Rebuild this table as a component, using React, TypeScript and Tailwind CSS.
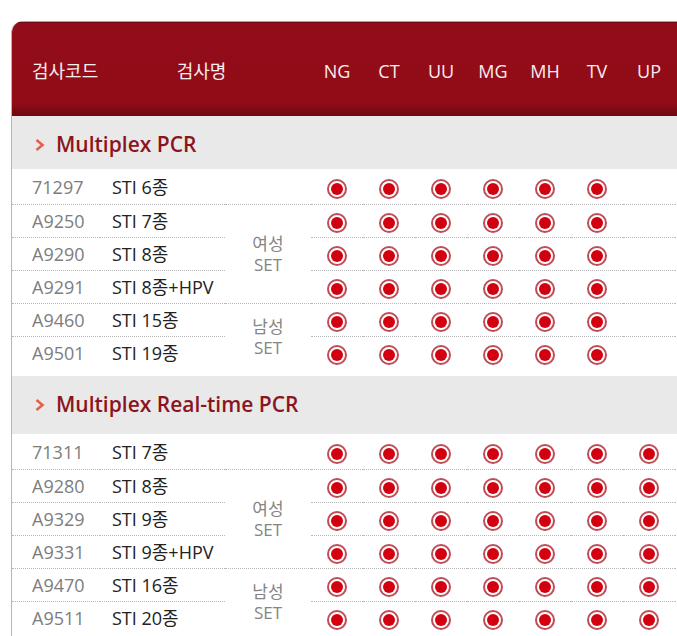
import React from 'react';

const FONT = '"Open Sans", "Noto Sans CJK KR", sans-serif';

const COLUMNS = ['NG', 'CT', 'UU', 'MG', 'MH', 'TV', 'UP'];

type Row = { code: string; name: string; marks: number };

const SECTIONS: { title: string; head: string; rows: Row[] }[] = [
  {
    title: 'Multiplex PCR',
    head: 'h-[53px] pt-[6px]',
    rows: [
      { code: '71297', name: 'STI 6종', marks: 6 },
      { code: 'A9250', name: 'STI 7종', marks: 6 },
      { code: 'A9290', name: 'STI 8종', marks: 6 },
      { code: 'A9291', name: 'STI 8종+HPV', marks: 6 },
      { code: 'A9460', name: 'STI 15종', marks: 6 },
      { code: 'A9501', name: 'STI 19종', marks: 6 },
    ],
  },
  {
    title: 'Multiplex Real-time PCR',
    head: 'h-[58px]',
    rows: [
      { code: '71311', name: 'STI 7종', marks: 7 },
      { code: 'A9280', name: 'STI 8종', marks: 7 },
      { code: 'A9329', name: 'STI 9종', marks: 7 },
      { code: 'A9331', name: 'STI 9종+HPV', marks: 7 },
      { code: 'A9470', name: 'STI 16종', marks: 7 },
      { code: 'A9511', name: 'STI 20종', marks: 7 },
    ],
  },
];

const Dot = () => (
  <span className="inline-flex w-5 h-5 rounded-full border-2 border-[#c04c57] items-center justify-center align-middle">
    <span className="w-[12px] h-[12px] rounded-full bg-[#d3000f]" />
  </span>
);

const Chevron = () => (
  <svg width="12" height="14" viewBox="0 0 12 14" className="mr-[10px]">
    <path d="M2.5 2 L8.5 7 L2.5 12" fill="none" stroke="#e6604c" strokeWidth="2.6" />
  </svg>
);

const SetLabel = ({ label }: { label: string }) => (
  <div className="flex flex-col items-center text-[#858585] text-[17px] leading-[21px]">
    <span>{label}</span>
    <span>SET</span>
  </div>
);

const dotted = 'border-b border-dotted border-[#b8b8b8]';

const SectionRows = ({ rows }: { rows: Row[] }) => (
  <>
    {rows.map((row, i) => {
      const first = i === 0;
      const last = i === rows.length - 1;
      const line = last ? '' : dotted;
      const h = first ? 'h-[36px] pt-[3px]' : last ? 'h-[39px] pb-[6px]' : 'h-[33px]';
      return (
        <tr key={row.code}>
          <td className={`${line} ${h} pl-[20px] text-[#7d7d7d]`}>{row.code}</td>
          <td className={`${line} ${h} pl-[12px] text-[#222] whitespace-nowrap`}>{row.name}</td>
          {first && <td className={`${dotted} ${h}`} />}
          {i === 1 && (
            <td rowSpan={3} className={`${dotted} align-middle`}>
              <SetLabel label="여성" />
            </td>
          )}
          {i === 4 && (
            <td rowSpan={2} className="align-middle pb-[6px]">
              <SetLabel label="남성" />
            </td>
          )}
          {COLUMNS.map((c, ci) => (
            <td key={c} className={`${line} ${h} text-center`}>
              {ci < row.marks ? <Dot /> : null}
            </td>
          ))}
          <td className={`${line} ${h}`} />
        </tr>
      );
    })}
  </>
);

const App: React.FC = () => {
  return (
    <div className="w-[677px] h-[636px] overflow-hidden bg-white pt-[21px] pl-[11px]" style={{ fontFamily: FONT }}>
      <div className="w-[720px] border-l border-[#b5b5b5] rounded-tl-[12px] overflow-hidden">
        <table className="w-[720px] table-fixed border-collapse text-[18px]">
          <colgroup>
            <col className="w-[88px]" />
            <col className="w-[125px]" />
            <col className="w-[86px]" />
            {COLUMNS.map(c => (
              <col key={c} className="w-[52px]" />
            ))}
            <col />
          </colgroup>
          <thead>
            <tr className="bg-[linear-gradient(to_bottom,#930c19_0%,#920c18_86%,#6f0811_100%)] text-[#f7eeee] border-t border-[#a9a9a9]">
              <th className="h-[94px] pt-[6px] pl-[20px] text-left font-normal">검사코드</th>
              <th colSpan={2} className="pt-[6px] text-center font-normal pr-[8px]">검사명</th>
              {COLUMNS.map(c => (
                <th key={c} className="pt-[6px] font-normal text-center">{c}</th>
              ))}
              <th />
            </tr>
          </thead>
          <tbody>
            {SECTIONS.map(section => (
              <React.Fragment key={section.title}>
                <tr className="bg-[#e9e9e9]">
                  <td colSpan={11} className={`${section.head} pl-[22px]`}>
                    <div className="flex items-center text-[21px] font-semibold text-[#8c1420]">
                      <Chevron />
                      {section.title}
                    </div>
                  </td>
                </tr>
                <SectionRows rows={section.rows} />
              </React.Fragment>
            ))}
          </tbody>
        </table>
      </div>
    </div>
  );
};

export default App;
